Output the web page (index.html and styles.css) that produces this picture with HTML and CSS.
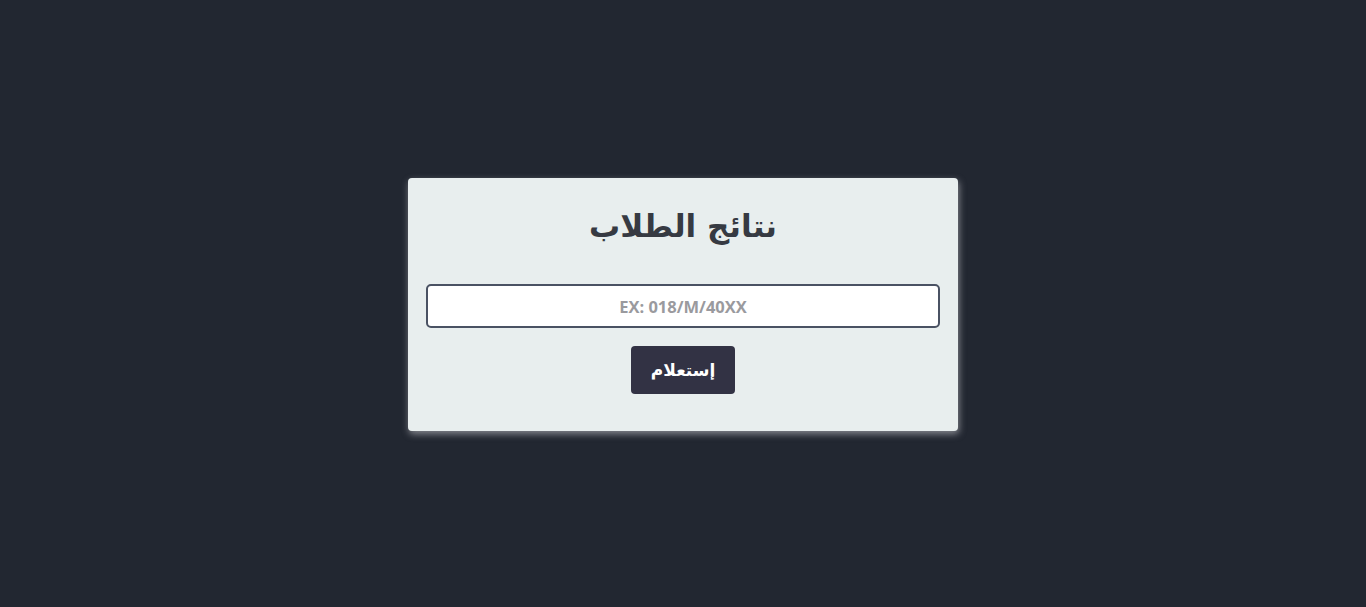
FILE: index.html
```html
<!DOCTYPE html>
<html lang="ar" dir="rtl">
<head>
<meta charset="utf-8">
<title>نتائج الطلاب</title>
<link rel="stylesheet" href="styles.css">
</head>
<body>
<main class="page">
  <form class="card">
    <h1 class="title">نتائج الطلاب</h1>
    <input class="field" type="text" placeholder="EX: 018/M/40XX" dir="ltr">
    <button class="btn" type="button">إستعلام</button>
  </form>
</main>
</body>
</html>
```
FILE: styles.css
```css
html, body {
  margin: 0;
  padding: 0;
  height: 100%;
}
body {
  background: #222731;
  font-family: "DejaVu Sans", "Noto Sans", sans-serif;
}
.page {
  height: 100%;
  display: flex;
  align-items: center;
  justify-content: center;
}
.card {
  width: 550px;
  height: 253px;
  margin-top: 2px;
  box-sizing: border-box;
  background: #e8eeee;
  border-radius: 4px;
  box-shadow: 1px 3px 7px rgba(200, 200, 205, 0.6);
  padding: 27px 18px 0;
  display: flex;
  flex-direction: column;
  align-items: center;
}
.title {
  margin: 0;
  font-size: 31px;
  font-weight: bold;
  color: #363a42;
  line-height: 42px;
}
.field {
  margin-top: 37px;
  width: 100%;
  height: 44px;
  box-sizing: border-box;
  border: 2px solid #4a5263;
  border-radius: 5px;
  background: #fff;
  text-align: center;
  font-family: "Open Sans", sans-serif;
  font-weight: 700;
  font-size: 16.5px;
  color: #333;
  outline: none;
}
.field::placeholder {
  color: #9a9a9e;
}
.btn {
  margin-top: 18px;
  width: 104px;
  height: 48px;
  border: none;
  border-radius: 4px;
  background: #323244;
  color: #fff;
  font-family: "DejaVu Sans", sans-serif;
  font-weight: bold;
  font-size: 17px;
  cursor: pointer;
}
```
